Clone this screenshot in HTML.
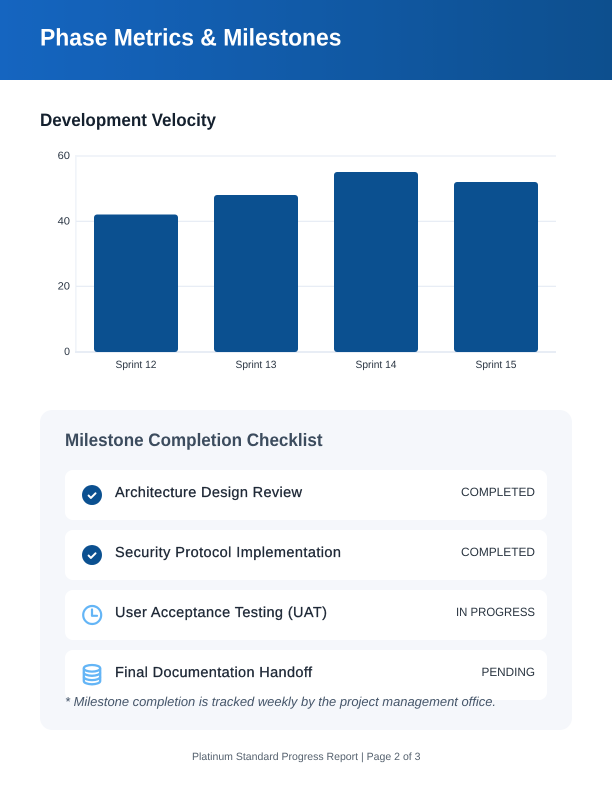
<!DOCTYPE html>
<html><head><meta charset="utf-8"><title>Phase Metrics &amp; Milestones</title>
<style>
html,body{margin:0;padding:0;background:#fff;width:612px;height:792px;overflow:hidden}
svg{display:block;position:absolute;left:0;top:0}
text{font-family:"Liberation Sans",sans-serif;text-rendering:geometricPrecision}
</style></head><body>
<svg width="612" height="792" viewBox="0 0 612 792" xmlns="http://www.w3.org/2000/svg">
<defs><linearGradient id="g" gradientUnits="userSpaceOnUse" x1="0" y1="0" x2="612" y2="0"><stop offset="0" stop-color="#1565c0"/><stop offset="1" stop-color="#0d4f8e"/></linearGradient></defs>
<rect width="612" height="80" fill="url(#g)"/>
<text x="40" y="45.700" font-size="24" font-weight="700" fill="#fff" textLength="301.500" lengthAdjust="spacingAndGlyphs">Phase Metrics &amp; Milestones</text>
<text x="40" y="126" font-size="18" font-weight="700" fill="#14202e" textLength="176" lengthAdjust="spacingAndGlyphs">Development Velocity</text>

<rect x="75" y="155" width="481" height="2" fill="#f1f4f9"/>
<rect x="75" y="155" width="1.700" height="197" fill="#f1f4f9"/>
<rect x="76" y="220.700" width="480" height="1.300" fill="#e8edf5"/>
<rect x="76" y="285.700" width="480" height="1.300" fill="#e8edf5"/>
<rect x="75" y="351" width="481" height="2" fill="#e8edf5"/>
<g fill="#0b5090">
<rect x="94" y="214.500" width="84" height="137.500" rx="3"/>
<rect x="214" y="195" width="84" height="157" rx="3"/>
<rect x="334" y="172" width="84" height="180" rx="3"/>
<rect x="454" y="182" width="84" height="170" rx="3"/>
</g>
<g font-size="10.500" fill="#2b3644" text-anchor="end">
<text x="70" y="159" textLength="12.400" lengthAdjust="spacingAndGlyphs">60</text>
<text x="70" y="224.500" textLength="12.400" lengthAdjust="spacingAndGlyphs">40</text>
<text x="70" y="289.500" textLength="12.400" lengthAdjust="spacingAndGlyphs">20</text>
<text x="70" y="355">0</text>
</g>
<g font-size="10.500" fill="#2b3644">
<text x="115.500" y="368" textLength="41" lengthAdjust="spacingAndGlyphs">Sprint 12</text>
<text x="235.500" y="368" textLength="41" lengthAdjust="spacingAndGlyphs">Sprint 13</text>
<text x="355.500" y="368" textLength="41" lengthAdjust="spacingAndGlyphs">Sprint 14</text>
<text x="475.500" y="368" textLength="41" lengthAdjust="spacingAndGlyphs">Sprint 15</text>
</g>

<rect x="40" y="410" width="532" height="320" rx="12" fill="#f5f7fb"/>
<text x="65" y="446" font-size="18" font-weight="700" fill="#3c4c5e" textLength="257.500" lengthAdjust="spacingAndGlyphs">Milestone Completion Checklist</text>

<g fill="#fff">
<rect x="65" y="470" width="482" height="50" rx="8"/>
<rect x="65" y="530" width="482" height="50" rx="8"/>
<rect x="65" y="590" width="482" height="50" rx="8"/>
<rect x="65" y="650" width="482" height="50" rx="8"/>
</g>

<circle cx="92" cy="495" r="10" fill="#0b5090"/>
<path d="M88.600 495.600l2.300 2.300 4.600-4.600" fill="none" stroke="#fff" stroke-width="2" stroke-linecap="round" stroke-linejoin="round"/>
<circle cx="92" cy="555" r="10" fill="#0b5090"/>
<path d="M88.600 555.600l2.300 2.300 4.600-4.600" fill="none" stroke="#fff" stroke-width="2" stroke-linecap="round" stroke-linejoin="round"/>

<circle cx="92.200" cy="615" r="9" fill="none" stroke="#64b5f6" stroke-width="2.200"/>
<path d="M92 609.500V615.800H97" fill="none" stroke="#64b5f6" stroke-width="2.200" stroke-linecap="round" stroke-linejoin="round"/>

<g fill="none" stroke="#64b5f6" stroke-width="2.300">
<ellipse cx="92" cy="668.300" rx="8.200" ry="3.300"/>
<path d="M83.800 668.300V681c0 1.900 3.700 3.300 8.200 3.300s8.200-1.400 8.200-3.300V668.300"/>
<path d="M83.800 672.500c0 1.900 3.700 3.300 8.200 3.300s8.200-1.400 8.200-3.300"/>
<path d="M83.800 676.800c0 1.900 3.700 3.300 8.200 3.300s8.200-1.400 8.200-3.300"/>
</g>

<g font-size="14.500" fill="#1f2937" stroke="#1f2937" stroke-width="0.300">
<text x="115" y="497" textLength="187" lengthAdjust="spacing">Architecture Design Review</text>
<text x="115" y="557" textLength="226" lengthAdjust="spacing">Security Protocol Implementation</text>
<text x="115" y="617" textLength="212" lengthAdjust="spacing">User Acceptance Testing (UAT)</text>
<text x="115" y="677" textLength="197" lengthAdjust="spacing">Final Documentation Handoff</text>
</g>
<g font-size="12" fill="#28333f">
<text x="461" y="496" textLength="74" lengthAdjust="spacingAndGlyphs">COMPLETED</text>
<text x="461" y="556" textLength="74" lengthAdjust="spacingAndGlyphs">COMPLETED</text>
<text x="456" y="616" textLength="79" lengthAdjust="spacingAndGlyphs">IN PROGRESS</text>
<text x="481.500" y="676" textLength="53.500" lengthAdjust="spacingAndGlyphs">PENDING</text>
</g>
<text x="65" y="706" font-size="13" font-style="italic" fill="#46566a" textLength="431" lengthAdjust="spacingAndGlyphs">* Milestone completion is tracked weekly by the project management office.</text>
<text x="192" y="760" font-size="10.500" fill="#56626f" textLength="228.500" lengthAdjust="spacingAndGlyphs">Platinum Standard Progress Report | Page 2 of 3</text>
</svg>
</body></html>
